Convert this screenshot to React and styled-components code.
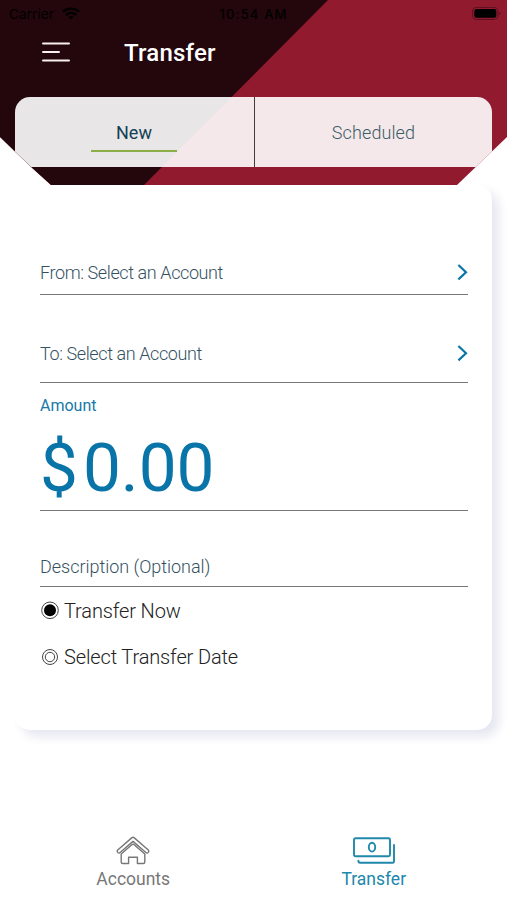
import React, { useState } from 'react';
import styled, { createGlobalStyle } from 'styled-components';

const GlobalStyle = createGlobalStyle`
  * {
    box-sizing: border-box;
  }
  body {
    margin: 0;
    background: #fff;
    font-family: Roboto, 'Liberation Sans', sans-serif;
  }
  button {
    padding: 0;
    border: 0;
    background: none;
    font-family: inherit;
  }
`;

function App() {
  const [tab, setTab] = useState('new');
  const [when, setWhen] = useState('now');

  return (
    <Screen>
      <GlobalStyle />
      <Header>
        <StatusBar>
          <Carrier>
            Carrier
            <WifiIcon />
          </Carrier>
          <Clock>10:54 AM</Clock>
          <BatteryIcon />
        </StatusBar>
        <TitleBar>
          <MenuIcon />
          <Title>Transfer</Title>
        </TitleBar>
        <Tabs>
          <Tab $active={tab === 'new'} onClick={() => setTab('new')}>
            <span>New</span>
          </Tab>
          <Tab $active={tab === 'scheduled'} onClick={() => setTab('scheduled')}>
            <span>Scheduled</span>
          </Tab>
        </Tabs>
      </Header>

      <Card>
        <Field $height='110px' $pad='11px'>
          <Label $tight>From: Select an Account</Label>
          <ChevronIcon />
        </Field>
        <Field $height='88px' $pad='18px'>
          <Label $tight>To: Select an Account</Label>
          <ChevronIcon />
        </Field>
        <AmountField>
          <AmountLabel>Amount</AmountLabel>
          <Amount>
            <Currency>$</Currency>
            <span>0.00</span>
          </Amount>
        </AmountField>
        <Field $height='76px' $pad='9px'>
          <Label>Description (Optional)</Label>
        </Field>
        <Options>
          <Option onClick={() => setWhen('now')}>
            <RadioIcon checked={when === 'now'} />
            <span>Transfer Now</span>
          </Option>
          <Option onClick={() => setWhen('date')}>
            <RadioIcon checked={when === 'date'} />
            <span>Select Transfer Date</span>
          </Option>
        </Options>
      </Card>

      <BottomNav>
        <NavItem>
          <HouseIcon />
          <span>Accounts</span>
        </NavItem>
        <NavItem $active>
          <MoneyIcon />
          <span>Transfer</span>
        </NavItem>
      </BottomNav>
    </Screen>
  );
}

export default App;

const WifiIcon = () => (
  <svg width='18' height='13' viewBox='0 0 18 13' fill='none' stroke='#000' strokeWidth='2.4'>
    <path d='M1 4.7C5.5 .6 12.5 .6 17 4.7' />
    <path d='M4 8C7 5.3 11 5.3 14 8' />
    <path d='M6.4 9.9C8 8.6 10 8.6 11.6 9.9L9 12.6z' fill='#000' stroke='none' />
  </svg>
);

const BatteryIcon = () => (
  <svg width='30' height='14' viewBox='0 0 30 14'>
    <rect x='.6' y='.4' width='25.3' height='12' rx='3.6' fill='none' stroke='#5d1020' />
    <rect x='2.3' y='2.1' width='22' height='8.6' rx='2.2' fill='#000' />
    <path d='M27.2 4.4v4c1.6-.6 1.6-3.4 0-4z' fill='#5d1020' />
  </svg>
);

const MenuIcon = () => (
  <svg width='28' height='22' viewBox='0 0 28 22' stroke='#f7eff0' strokeWidth='2' strokeLinecap='round'>
    <path d='M1 1.4H27M1 10H17M1 18.5H27' />
  </svg>
);

const ChevronIcon = () => (
  <svg width='12' height='20' viewBox='0 0 12 20' fill='none' stroke='#0b75a8' strokeWidth='2.2'>
    <path d='M2.4 2L10 9.2L2.4 16.4' />
  </svg>
);

const RadioIcon = ({ checked }) => (
  <svg width='20' height='20' viewBox='0 0 20 20' fill='none'>
    <circle cx='10' cy={checked ? 9.3 : 10} r={checked ? 8.3 : 7.5} stroke='#444' strokeWidth='1' />
    {checked ? (
      <circle cx='10' cy='9.3' r='6' fill='#000' />
    ) : (
      <circle cx='10' cy='10' r='4.7' stroke='#444' strokeWidth='1' />
    )}
  </svg>
);

const HouseIcon = () => (
  <svg width='34' height='29' viewBox='0 0 34 29' fill='none' stroke='#777' strokeWidth='1.4' strokeLinejoin='round'>
    <path d='M15.7 1.9Q17 .8 18.3 1.9L32.3 14Q33.3 15.2 32.2 16.4Q31.1 17.5 29.9 16.5L17 5.4L4.1 16.5Q2.9 17.5 1.8 16.4Q.7 15.2 1.7 14z' />
    <path d='M5.2 18V26Q5.2 27.5 6.7 27.5H12.6V21.3H21.4V27.5H27.3Q28.8 27.5 28.8 26V18L18.2 8.7Q17 7.7 15.8 8.7z' />
  </svg>
);

const MoneyIcon = () => (
  <svg width='42' height='27' viewBox='0 0 42 27' fill='none' stroke='#2088aa' strokeWidth='1.9' strokeLinecap='round' strokeLinejoin='round'>
    <rect x='1' y='1.2' width='36' height='18' rx='1.5' />
    <ellipse cx='19' cy='10.2' rx='3.2' ry='4.4' />
    <path d='M41 8V24.4Q41 25.8 39.6 25.8H7Q5.4 25.8 5.4 23.7' />
  </svg>
);

const Screen = styled.div`
  width: 507px;
  height: 900px;
  display: flex;
  flex-direction: column;
  overflow: hidden;
  background: #fff;
`;

const Header = styled.header`
  position: relative;
  z-index: 1;
  flex: none;
  height: 185px;
  background: #911a2f;
  clip-path: polygon(0 0, 100% 0, 100% 137px, 457px 100%, 51px 100%, 30px 166px, 0 137px);

  &::before {
    content: '';
    position: absolute;
    inset: 0;
    z-index: -1;
    background: #23070c;
    clip-path: polygon(0 0, 328px 0, 144px 100%, 0 100%);
  }
`;

const StatusBar = styled.div`
  height: 27px;
  padding: 0 5px 0 9px;
  display: grid;
  grid-template-columns: 1fr auto 1fr;
  align-items: center;
  font-family: Inter, sans-serif;
  font-size: 13.5px;
  color: #000;

  > svg {
    justify-self: end;
  }
`;

const Carrier = styled.div`
  display: flex;
  align-items: center;
  gap: 8px;
  letter-spacing: 0.1px;
`;

const Clock = styled.div`
  margin-right: 4px;
  font-weight: 500;
  font-size: 13px;
  letter-spacing: 1.15px;
`;

const TitleBar = styled.div`
  height: 70px;
  padding: 0 0 18px 42px;
  display: flex;
  align-items: center;
  gap: 54px;
`;

const Title = styled.h1`
  margin: 0;
  font-size: 24px;
  font-weight: 500;
  letter-spacing: 0.2px;
  color: #fff;
`;

const Tabs = styled.div`
  height: 69.5px;
  margin: 0 15px;
  display: flex;
  overflow: hidden;
  border-radius: 15px 15px 0 0;
  background: rgba(255, 255, 255, 0.9);
`;

const Tab = styled.button`
  width: 238px;
  display: flex;
  justify-content: center;
  align-items: flex-start;
  padding-top: 22px;
  font-size: 18px;
  font-weight: ${(p) => (p.$active ? 400 : 300)};
  color: ${(p) => (p.$active ? '#123f57' : '#3c5c68')};

  & + & {
    margin-left: 1px;
    border-left: 1px solid #443a3e;
  }

  span {
    width: 86px;
    height: 33px;
    line-height: 27px;
    letter-spacing: 0.1px;
    border-bottom: 2px solid ${(p) => (p.$active ? '#8bae46' : 'transparent')};
  }
`;

const Card = styled.main`
  flex: none;
  height: 545px;
  margin: 0 15px;
  padding: 0 24px 0 25px;
  border-radius: 15px;
  background: #fff;
  box-shadow: 7px 7px 10px rgba(60, 60, 140, 0.12);
`;

const Field = styled.div`
  height: ${(p) => p.$height};
  padding-bottom: ${(p) => p.$pad};
  display: flex;
  justify-content: space-between;
  align-items: flex-end;
  border-bottom: 1px solid #777;
`;

const Label = styled.span`
  font-size: 18px;
  line-height: 20px;
  font-weight: 300;
  letter-spacing: ${(p) => (p.$tight ? '-0.4px' : '-0.03px')};
  color: #34515f;
`;

const AmountField = styled.div`
  height: 128px;
  padding-top: 14px;
  border-bottom: 1px solid #777;
`;

const AmountLabel = styled.div`
  font-size: 16px;
  line-height: 18px;
  color: #1678a8;
`;

const Amount = styled.div`
  display: flex;
  margin-top: 16px;
  font-size: 67.5px;
  line-height: 74px;
  color: #0874a8;
`;

const Currency = styled.span`
  margin-right: 5px;
`;

const Options = styled.div`
  padding-top: 10px;
  display: flex;
  flex-direction: column;
  gap: 18px;
`;

const Option = styled.button`
  display: flex;
  align-items: center;
  gap: 4px;
  height: 28px;
  font-size: 20px;
  font-weight: 300;
  letter-spacing: -0.13px;
  color: #222;
`;

const BottomNav = styled.nav`
  margin-top: auto;
  height: 64px;
  padding: 0 13px;
  display: flex;
`;

const NavItem = styled.button`
  flex: 1;
  display: flex;
  flex-direction: column;
  align-items: center;
  font-size: 17.5px;
  line-height: 24px;
  color: ${(p) => (p.$active ? '#2088aa' : '#777')};

  svg {
    flex: none;
    margin: ${(p) => (p.$active ? '1px 0 3px' : '0 0 2px')};
  }
`;
